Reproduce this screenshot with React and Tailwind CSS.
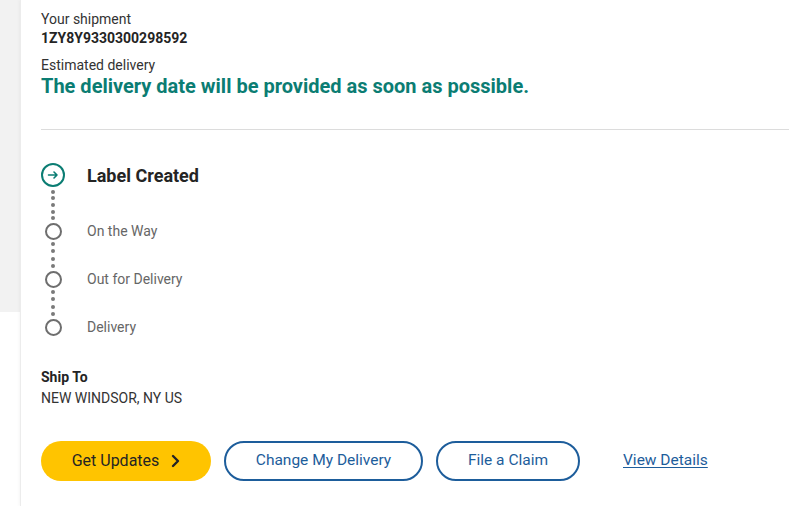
import React from "react";

function Dots({ h, n }) {
  return (
    <div className="w-6 flex flex-col items-center justify-evenly" style={{ height: h }}>
      {Array.from({ length: n }).map((_, i) => (
        <div key={i} className="w-[4px] h-[4px] rounded-full bg-[#7a7a7a]" />
      ))}
    </div>
  );
}

function Step({ label }) {
  return (
    <div className="flex items-center h-4">
      <div className="w-6 flex justify-center">
        <div className="w-[17px] h-[17px] rounded-full border-2 border-[#6e6e6e] bg-white" />
      </div>
      <span className="ml-[22px] text-[14px] text-[#666]">{label}</span>
    </div>
  );
}

export default function App() {
  return (
    <div
      className="w-[789px] h-[506px] flex bg-white overflow-hidden text-[#333]"
      style={{ fontFamily: "Roboto, 'Liberation Sans', sans-serif" }}
    >
      <div className="w-5 shrink-0">
        <div className="h-[312px] bg-[#f2f2f2]" />
      </div>
      <div className="flex-1 border-l border-[#ececec] shadow-[-1px_0_3px_rgba(0,0,0,0.04)] pt-[10px] flex flex-col">
        <div className="pl-5">
          <div className="text-[14px] leading-[19px] text-[#333]">Your shipment</div>
          <div className="text-[14px] leading-[19px] font-bold text-[#242424]">1ZY8Y9330300298592</div>
          <div className="mt-2 text-[14px] leading-[19px] text-[#333]">Estimated delivery</div>
          <div className="text-[20px] leading-[22px] font-bold text-[#0b7d73]">
            The delivery date will be provided as soon as possible.
          </div>
        </div>
        <div className="ml-5 mt-[32px] h-px bg-[#dcdcdc]" />
        <div className="pl-5 mt-[33px] flex flex-col">
          <div className="flex items-center h-6">
            <div className="w-6 h-6 rounded-full border-[2.5px] border-[#0b7d73] flex items-center justify-center">
              <svg width="12" height="10" viewBox="0 0 12 10" fill="none" stroke="#0b7d73" strokeWidth="1.6" strokeLinecap="round" strokeLinejoin="round">
                <path d="M1.5 5h8.5M7 2l3 3-3 3" />
              </svg>
            </div>
            <span className="ml-[22px] text-[18px] font-bold text-[#242424]">Label Created</span>
          </div>
          <Dots h={36} n={5} />
          <Step label="On the Way" />
          <Dots h={32} n={4} />
          <Step label="Out for Delivery" />
          <Dots h={32} n={4} />
          <Step label="Delivery" />
        </div>
        <div className="pl-5 mt-[33px]">
          <div className="text-[14px] leading-[19px] font-bold text-[#242424]">Ship To</div>
          <div className="mt-[2px] text-[14px] leading-[19px] text-[#333]">NEW WINDSOR, NY US</div>
        </div>
        <div className="pl-5 mt-[33px] flex items-center">
          <button className="h-10 w-[170px] rounded-full bg-[#ffc400] text-[16px] text-[#242424] flex items-center justify-center gap-3">
            <span>Get Updates</span>
            <svg width="9" height="14" viewBox="0 0 9 14" fill="none" stroke="#242424" strokeWidth="2.4" strokeLinecap="round" strokeLinejoin="round">
              <path d="M2 2l5 5-5 5" />
            </svg>
          </button>
          <button className="ml-[13px] h-10 w-[199px] rounded-full border-2 border-[#1d5d9b] bg-white text-[15.5px] text-[#1d5d9b]">
            Change My Delivery
          </button>
          <button className="ml-[13px] h-10 w-[144px] rounded-full border-2 border-[#1d5d9b] bg-white text-[15.5px] text-[#1d5d9b]">
            File a Claim
          </button>
          <a className="ml-[43px] text-[15.5px] text-[#1d5d9b] underline underline-offset-2">View Details</a>
        </div>
      </div>
    </div>
  );
}
